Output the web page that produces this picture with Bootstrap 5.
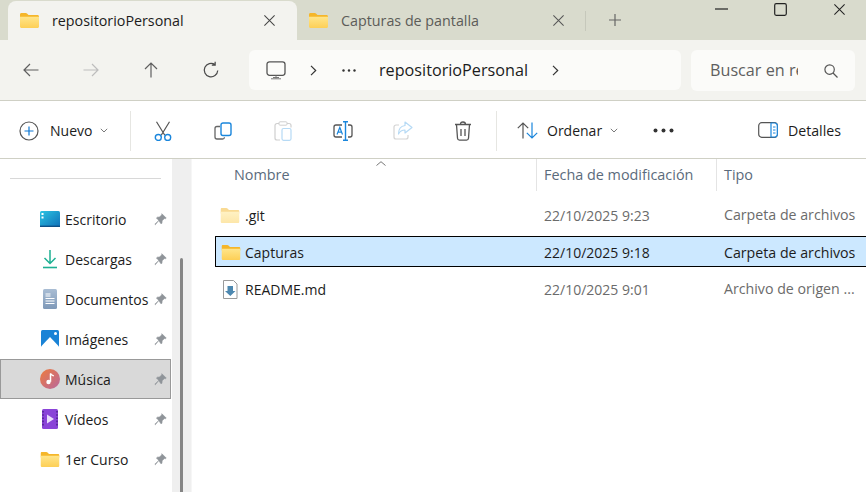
<!DOCTYPE html>
<html lang="es">
<head>
  <meta charset="utf-8"/>
  <title>repositorioPersonal</title>
  <link href="https://cdn.jsdelivr.net/npm/bootstrap@5.3.0/dist/css/bootstrap.min.css" rel="stylesheet"/>
  <style>
    html, body { height: 100%; }
    body {
      width: 866px; height: 492px; overflow: hidden; background: #fff;
      font-family: "Open Sans", "Liberation Sans", sans-serif; font-size: 14px; color: #1c1c1c;
    }
    svg { display: block; flex: none; }
    .sprite { position: absolute; width: 0; height: 0; }

    /* tabs */
    .tab-strip { height: 40px; background: #d9dbcd; padding: 1px 0 0 8px; }
    .win-tab { width: 289px; height: 39px; padding: 0 21px 0 12px; font-size: 14.3px; }
    .win-tab.is-active { background: #f3f3ef; border-radius: 8px 8px 0 0; }
    .win-tab.is-idle { width: 288px; padding-right: 20px; }
    .win-tab .tab-name { margin-left: 13px; white-space: nowrap; }
    .win-tab.is-idle .tab-name { color: #5c5c58; }
    .tab-sep { width: 1px; height: 20px; background: #c6c8bb; margin-top: 10px; }
    .tab-plus { margin: 12px 0 0 22px; }
    .win-controls { margin-left: auto; padding-right: 20px; height: 16px; gap: 46px; }

    /* address bar */
    .nav-strip { height: 61px; background: #f3f3ef; border-bottom: 1px solid #cfd0c5; padding: 10px 11px 0 1px; }
    .nav-btn { width: 60px; height: 40px; }
    .addr-box { width: 432px; height: 40px; background: #fbfbf9; border-radius: 6px; margin-left: 8px; padding-left: 17px; font-size: 16.2px; }
    .addr-dots { margin-left: 25px; }
    .addr-name { margin-left: 23px; }
    .search-box { width: 164px; height: 41px; background: #fbfbf9; border-radius: 6px; margin-left: 10px; padding: 0 17px 0 19px; color: #5f5f5f; font-size: 16.2px; }
    .search-box .search-text { width: 88px; overflow: hidden; white-space: nowrap; }

    /* command bar */
    .cmd-strip { height: 58px; border-bottom: 1px solid #cfd0c5; padding: 2px 25px 0 19px; }
    .cmd-sep { width: 1px; height: 40px; background: #e6e6e2; }
    .cmd-btn { width: 60px; height: 40px; }
    .cmd-new { width: 111px; }
    .cmd-new span { margin-left: 11px; }
    .cmd-group { margin-left: 2px; }
    .cmd-sep-2 { margin-left: 3px; }
    .cmd-sort { width: 137px; margin-left: 12px; padding-left: 8px; }
    .cmd-sort span { margin-left: 9px; }
    .cmd-more { margin-left: 7px; }
    .cmd-details span { margin-left: 10px; font-size: 14.2px; }

    /* main area */
    .main-area { height: 333px; }
    .side-pane { width: 172px; padding-top: 19px; }
    .side-rule { height: 1px; background: #d8d8d8; margin: 0 11px 20px 10px; }
    .side-item { height: 40px; padding-left: 39px; padding-right: 3px; border: 1px solid transparent; width: 171px; white-space: nowrap; }
    .side-item.is-current { background: #d9d9d9; border-color: #999; }
    .side-item .side-icon { width: 20px; margin-right: 5px; }
    .side-item .side-pin { margin-left: auto; }
    .side-scroll { width: 20px; background: #efefef; border-right: 1px solid #f6f6f6; padding: 99px 0 0 8px; }
    .side-thumb { width: 3px; height: 100%; background: #858585; border-radius: 2px 2px 0 0; }

    .list-pane { min-width: 0; position: relative; padding-left: 23px; }
    .sort-caret { position: absolute; left: 184px; top: 2px; }
    .list-head { height: 33px; color: #5b6b7c; font-size: 14.4px; }
    .head-cell { height: 32px; padding-left: 7px; }
    .col-name { width: 321px; }
    .head-cell.col-name { padding-left: 19px; }
    .col-date { width: 180px; }
    .head-cell.col-date, .head-cell.col-type { border-left: 1px solid #e4e4e4; }
    .file-row { height: 30px; margin-top: 7px; color: #6b6b6b; white-space: nowrap; }
    .file-row.first-row { margin-top: 8px; }
    .file-row .col-name { color: #1c1c1c; padding-left: 5px; width: 320px; }
    .file-row .col-date { padding-left: 9px; }
    .file-row .col-type { padding-left: 9px; font-size: 14.2px; }
    .file-row .file-icon { width: 20px; margin-right: 5px; }
    .file-row.is-selected { height: 31px; margin-top: 6px; padding-top: 2px; background: #cce8ff; border: 1px solid #000; border-right: 0; color: #1c1c1c; border-radius: 1px 0 0 1px; }
    .file-row.is-selected .col-name { width: 319px; }
    .file-row.is-selected .file-icon { margin-right: 4px; }
    .file-row.is-selected .col-date, .file-row.is-selected .col-type { padding-left: 9px; }
  </style>
</head>
<body>
  <svg class="sprite" aria-hidden="true">
    <defs>
      <linearGradient id="fold" x1="0" y1="0" x2="0" y2="1"><stop offset="0" stop-color="#ffe58a"/><stop offset="1" stop-color="#fdcf56"/></linearGradient>
      <linearGradient id="desk" x1="0" y1="0" x2="1" y2="1"><stop offset="0" stop-color="#2bc4e2"/><stop offset="1" stop-color="#0f6fb8"/></linearGradient>
      <linearGradient id="docs" x1="0" y1="0" x2="0" y2="1"><stop offset="0" stop-color="#a9bdd4"/><stop offset="1" stop-color="#7f99b8"/></linearGradient>
      <linearGradient id="mus" x1="0" y1="0" x2="1" y2="1"><stop offset="0" stop-color="#ee7b3c"/><stop offset="1" stop-color="#b8689f"/></linearGradient>
    </defs>
    <symbol id="i-folder" viewBox="0 0 19 15">
      <path d="M0 1.500C0 .7.6 0 1.400 0h4.400c.5 0 .9.2 1.200.5L8.500 2H17.500c.8 0 1.500.7 1.500 1.500v2H0z" fill="#f5b62a"/>
      <path d="M0 3.800h19v9.700c0 .8-.7 1.500-1.500 1.500h-16C.7 15 0 14.300 0 13.500z" fill="url(#fold)"/>
    </symbol>
    <symbol id="i-x" viewBox="0 0 14 14"><path d="M1.500 1.500l11 11m0-11l-11 11" stroke="currentColor" stroke-width="1.100" fill="none"/></symbol>
    <symbol id="i-pin" viewBox="0 0 14 14"><path d="M8.500.8l4.700 4.700-1 .7-1-.2-2.400 2.400-.2 2.500-.9.900L5 8.200 1.500 12.600.9 12 5.200 8 2.600 5.400l.9-.9 2.500-.2 2.400-2.400-.1-1z" fill="#8f9499" stroke="#8f9499" stroke-width=".6" stroke-linejoin="round"/></symbol>
    <symbol id="i-chev" viewBox="0 0 8 5"><path d="M.8.8L4 4l3.200-3.200" stroke="#7a7a7a" fill="none"/></symbol>
  </svg>

  <div class="tab-strip d-flex">
    <div class="win-tab is-active d-flex align-items-center">
      <svg width="19" height="15"><use href="#i-folder"/></svg>
      <span class="tab-name">repositorioPersonal</span>
      <svg class="ms-auto" width="13" height="13" color="#444"><use href="#i-x"/></svg>
    </div>
    <div class="win-tab is-idle d-flex align-items-center">
      <svg width="19" height="15"><use href="#i-folder"/></svg>
      <span class="tab-name">Capturas de pantalla</span>
      <svg class="ms-auto" width="13" height="13" color="#555"><use href="#i-x"/></svg>
    </div>
    <div class="tab-sep"></div>
    <svg class="tab-plus" width="14" height="14" viewBox="0 0 14 14"><path d="M7 1v12M1 7h12" stroke="#666" stroke-width="1.200"/></svg>
    <div class="win-controls d-flex align-items-center">
      <svg width="13" height="2" viewBox="0 0 13 2"><path d="M0 1h13" stroke="#222" stroke-width="1.200"/></svg>
      <svg width="13" height="13" viewBox="0 0 13 13"><rect x=".7" y=".7" width="11.600" height="11.600" rx="1.500" stroke="#222" stroke-width="1.200" fill="none"/></svg>
      <svg width="13" height="13" color="#222"><use href="#i-x"/></svg>
    </div>
  </div>

  <div class="nav-strip d-flex">
    <div class="nav-btn d-flex align-items-center justify-content-center">
      <svg width="16" height="14" viewBox="0 0 16 14"><path d="M15.500 7H1M7 1L1 7l6 6" stroke="#5f5f5f" stroke-width="1.200" fill="none"/></svg>
    </div>
    <div class="nav-btn d-flex align-items-center justify-content-center">
      <svg width="16" height="14" viewBox="0 0 16 14"><path d="M.5 7H15M9 1l6 6-6 6" stroke="#bdbdbd" stroke-width="1.200" fill="none"/></svg>
    </div>
    <div class="nav-btn d-flex align-items-center justify-content-center">
      <svg width="14" height="16" viewBox="0 0 14 16"><path d="M7 15.500V1M1 7l6-6 6 6" stroke="#5f5f5f" stroke-width="1.200" fill="none"/></svg>
    </div>
    <div class="nav-btn d-flex align-items-center justify-content-center">
      <svg width="18" height="18" viewBox="0 0 16 16"><path d="M14 8.500A6 6 0 1 1 11.500 3.200M11.700.7v3h-3" stroke="#4a4a4a" stroke-width="1.100" fill="none"/></svg>
    </div>
    <div class="addr-box d-flex align-items-center">
      <svg width="20" height="19" viewBox="0 0 20 19"><rect x="1" y=".8" width="18" height="13.500" rx="2.500" stroke="#555" stroke-width="1.300" fill="none"/><path d="M10 14.500v3M5 17.800h10M7 16.500h6" stroke="#777" stroke-width="1"/></svg>
      <svg class="ms-4" width="7" height="11" viewBox="0 0 7 11"><path d="M1 .8l4.700 4.700L1 10.200" stroke="#333" stroke-width="1.200" fill="none"/></svg>
      <svg class="addr-dots" width="14" height="3" viewBox="0 0 14 3"><circle cx="1.500" cy="1.500" r="1.200" fill="#333"/><circle cx="7" cy="1.500" r="1.200" fill="#333"/><circle cx="12.500" cy="1.500" r="1.200" fill="#333"/></svg>
      <span class="addr-name">repositorioPersonal</span>
      <svg class="ms-4" width="7" height="11" viewBox="0 0 7 11"><path d="M1 .8l4.700 4.700L1 10.200" stroke="#333" stroke-width="1.200" fill="none"/></svg>
    </div>
    <div class="search-box d-flex align-items-center">
      <span class="search-text">Buscar en re</span>
      <svg class="ms-auto" width="14" height="14" viewBox="0 0 14 14"><circle cx="5.600" cy="5.600" r="4.700" stroke="#555" stroke-width="1.200" fill="none"/><path d="M9 9l4.500 4.500" stroke="#555" stroke-width="1.300"/></svg>
    </div>
  </div>

  <div class="cmd-strip d-flex align-items-center">
    <div class="cmd-new d-flex align-items-center">
      <svg width="20" height="20" viewBox="0 0 20 20"><circle cx="10" cy="10" r="9" stroke="#555" stroke-width="1.200" fill="none"/><path d="M10 5.500v9M5.500 10h9" stroke="#0f78d4" stroke-width="1.200"/></svg>
      <span>Nuevo</span>
      <svg class="ms-2" width="8" height="5"><use href="#i-chev"/></svg>
    </div>
    <div class="cmd-sep"></div>
    <div class="cmd-group d-flex">
      <div class="cmd-btn d-flex align-items-center justify-content-center">
        <svg width="18" height="20" viewBox="0 0 18 20"><path d="M2.500.8l8.300 13.500M15.500.8L7.200 14.300" stroke="#555" stroke-width="1.200" fill="none"/><circle cx="4.300" cy="16.500" r="3" stroke="#1a86dc" stroke-width="1.400" fill="none"/><circle cx="13.700" cy="16.500" r="3" stroke="#1a86dc" stroke-width="1.400" fill="none"/></svg>
      </div>
      <div class="cmd-btn d-flex align-items-center justify-content-center">
        <svg width="18" height="18" viewBox="0 0 18 18"><path d="M6 4.500H3A2 2 0 0 0 1 6.500V15a2 2 0 0 0 2 2h5.500a2 2 0 0 0 2-1.800" stroke="#666" stroke-width="1.300" fill="none"/><rect x="7" y="1" width="10" height="12.500" rx="2" stroke="#1a86dc" stroke-width="1.400" fill="#fff"/></svg>
      </div>
      <div class="cmd-btn d-flex align-items-center justify-content-center">
        <svg width="18" height="20" viewBox="0 0 18 20"><path d="M5 2.500H3A2 2 0 0 0 1 4.500V17a2 2 0 0 0 2 2h3M13 2.500h2a2 2 0 0 1 2 2v2" stroke="#cfcfcf" stroke-width="1.200" fill="none"/><rect x="5" y=".8" width="8" height="3.400" rx="1" stroke="#cfcfcf" fill="none"/><rect x="8" y="7.500" width="9" height="11.800" rx="1.500" stroke="#b6daf5" stroke-width="1.200" fill="none"/></svg>
      </div>
      <div class="cmd-btn d-flex align-items-center justify-content-center">
        <svg width="20" height="20" viewBox="0 0 20 20"><path d="M9 4H3a2 2 0 0 0-2 2v8a2 2 0 0 0 2 2h6M15 4h2a2 2 0 0 1 2 2v8a2 2 0 0 1-2 2h-2" stroke="#555" stroke-width="1.300" fill="none"/><path d="M12.500.8v18.400M10 .8h5M10 19.200h5" stroke="#1a86dc" stroke-width="1.400"/><path d="M4 13.500L6.800 6.500l2.700 7M5 11.200h3.600" stroke="#1a86dc" stroke-width="1.200" fill="none"/></svg>
      </div>
      <div class="cmd-btn d-flex align-items-center justify-content-center">
        <svg width="20" height="19" viewBox="0 0 20 19"><path d="M6 4H3a2 2 0 0 0-2 2v10a2 2 0 0 0 2 2h10a2 2 0 0 0 2-2v-2" stroke="#d4d4d4" stroke-width="1.200" fill="none"/><path d="M12 1l7 5.500-7 5.500V9C9 9 7 10 5.500 13c0-5 2.500-8 6.500-8.500z" stroke="#b6daf5" stroke-width="1.200" fill="none" stroke-linejoin="round"/></svg>
      </div>
      <div class="cmd-btn d-flex align-items-center justify-content-center">
        <svg width="18" height="20" viewBox="0 0 18 20"><path d="M1 3.500h16M6.500 3.500C6.500 1.800 7.500 1 9 1s2.500.8 2.500 2.500M2.500 3.500l1 13.800a2 2 0 0 0 2 1.800h7a2 2 0 0 0 2-1.800l1-13.800M7 8v7M11 8v7" stroke="#555" stroke-width="1.300" fill="none"/></svg>
      </div>
    </div>
    <div class="cmd-sep cmd-sep-2"></div>
    <div class="cmd-sort d-flex align-items-center">
      <svg width="21" height="17" viewBox="0 0 21 17"><path d="M6 16.500V1M.8 6.200L6 1l5.200 5.200" stroke="#555" stroke-width="1.200" fill="none"/><path d="M15 .5V16M9.800 10.800L15 16l5.200-5.200" stroke="#1a86dc" stroke-width="1.200" fill="none"/></svg>
      <span>Ordenar</span>
      <svg class="ms-2" width="8" height="5"><use href="#i-chev"/></svg>
    </div>
    <svg class="cmd-more" width="21" height="5" viewBox="0 0 21 5"><circle cx="2.500" cy="2.500" r="2" fill="#333"/><circle cx="10.500" cy="2.500" r="2" fill="#333"/><circle cx="18.500" cy="2.500" r="2" fill="#333"/></svg>
    <div class="cmd-details d-flex align-items-center ms-auto">
      <svg width="20" height="16" viewBox="0 0 20 16"><rect x=".7" y=".7" width="18.600" height="14.600" rx="3" stroke="#555" stroke-width="1.200" fill="none"/><path d="M13 1h3.500A2.700 2.700 0 0 1 19.300 3.700v8.600a2.700 2.700 0 0 1-2.800 2.700H13z" stroke="#1a86dc" stroke-width="1.200" fill="#fff"/><path d="M15 5h2.500M15 8h2.500M15 11h2.500" stroke="#1a86dc"/></svg>
      <span>Detalles</span>
    </div>
  </div>

  <div class="main-area d-flex">
    <div class="side-pane">
      <div class="side-rule"></div>
      <div class="side-item d-flex align-items-center">
        <svg class="side-icon" height="16" viewBox="0 0 20 16"><rect width="20" height="16" rx="1.500" fill="url(#desk)"/><path d="M0 14.600h20V16H0z" fill="#0d4f86"/><rect x="1.500" y="2" width="2" height="2" fill="#fff"/><rect x="1.500" y="5.500" width="2" height="2" fill="#fff"/></svg>
        <span>Escritorio</span>
        <svg class="side-pin" width="13" height="13"><use href="#i-pin"/></svg>
      </div>
      <div class="side-item d-flex align-items-center">
        <svg class="side-icon" height="20" viewBox="0 0 20 20"><path d="M10 1v13M4.500 9l5.500 5.500L15.500 9" stroke="#1eb093" stroke-width="1.500" fill="none"/><path d="M3 18.500h14" stroke="#1eb093" stroke-width="1.600"/></svg>
        <span>Descargas</span>
        <svg class="side-pin" width="13" height="13"><use href="#i-pin"/></svg>
      </div>
      <div class="side-item d-flex align-items-center">
        <svg class="side-icon" height="20" viewBox="0 0 20 20"><rect x="3" y="0" width="14" height="20" rx="1.500" fill="url(#docs)"/><path d="M5.500 5h5M5.500 7h5M5.500 9.500h9M5.500 12h9M5.500 14.500h9" stroke="#fff" stroke-width="1"/></svg>
        <span>Documentos</span>
        <svg class="side-pin" width="13" height="13"><use href="#i-pin"/></svg>
      </div>
      <div class="side-item d-flex align-items-center">
        <svg class="side-icon" height="18" viewBox="0 0 20 18"><rect x="1" width="18" height="18" rx="1.500" fill="#1a83d6"/><path d="M1 16.500L10 7l9 9.500V18H1z" fill="#fff"/><circle cx="15.500" cy="3.500" r="1.500" fill="#fff"/></svg>
        <span>Imágenes</span>
        <svg class="side-pin" width="13" height="13"><use href="#i-pin"/></svg>
      </div>
      <div class="side-item is-current d-flex align-items-center">
        <svg class="side-icon" height="20" viewBox="0 0 20 20"><circle cx="10" cy="10" r="10" fill="url(#mus)"/><path d="M10.500 4.500v8.300" stroke="#fff" stroke-width="1.500"/><path d="M10.500 4.500c1 1.800 2.500 2 3.300 2.500" stroke="#fff" stroke-width="1.300" fill="none"/><circle cx="8.500" cy="13" r="2.200" fill="#fff"/></svg>
        <span>Música</span>
        <svg class="side-pin" width="13" height="13"><use href="#i-pin"/></svg>
      </div>
      <div class="side-item d-flex align-items-center">
        <svg class="side-icon" height="20" viewBox="0 0 20 20"><rect x="2" width="16" height="20" rx="1.500" fill="#8a44d8"/><path d="M7 5.500l7 4.500-7 4.500z" fill="#e9dcfb"/><path d="M3 2v16M17 2v16" stroke="#3d1a78" stroke-width="1.200" stroke-dasharray="1.600 1.600"/></svg>
        <span>Vídeos</span>
        <svg class="side-pin" width="13" height="13"><use href="#i-pin"/></svg>
      </div>
      <div class="side-item d-flex align-items-center">
        <svg class="side-icon" height="15" viewBox="0 0 19 15"><use href="#i-folder"/></svg>
        <span>1er Curso</span>
        <svg class="side-pin" width="13" height="13"><use href="#i-pin"/></svg>
      </div>
    </div>
    <div class="side-scroll"><div class="side-thumb"></div></div>

    <div class="list-pane flex-grow-1">
      <svg class="sort-caret" width="10" height="5" viewBox="0 0 10 5"><path d="M.5 4.500L5 .7l4.500 3.800" stroke="#777" fill="none"/></svg>
      <div class="list-head d-flex">
        <div class="head-cell col-name d-flex align-items-center">Nombre</div>
        <div class="head-cell col-date d-flex align-items-center">Fecha de modificación</div>
        <div class="head-cell col-type d-flex align-items-center">Tipo</div>
      </div>
      <div class="list-body">
        <div class="file-row first-row d-flex align-items-center">
          <div class="col-name d-flex align-items-center">
            <svg class="file-icon" height="15" viewBox="0 0 19 15" opacity=".5"><use href="#i-folder"/></svg>
            <span>.git</span>
          </div>
          <div class="col-date">22/10/2025 9:23</div>
          <div class="col-type">Carpeta de archivos</div>
        </div>
        <div class="file-row is-selected d-flex align-items-center">
          <div class="col-name d-flex align-items-center">
            <svg class="file-icon" height="15" viewBox="0 0 19 15"><use href="#i-folder"/></svg>
            <span>Capturas</span>
          </div>
          <div class="col-date">22/10/2025 9:18</div>
          <div class="col-type">Carpeta de archivos</div>
        </div>
        <div class="file-row d-flex align-items-center">
          <div class="col-name d-flex align-items-center">
            <svg class="file-icon" height="19" viewBox="0 0 20 19"><path d="M3.500.5h10l3.500 3.500v14.500H3.500z" fill="#fff" stroke="#9a9a9a"/><path d="M7.500 6h5.500v5h2.500l-5.200 5-5.300-5h2.500z" fill="#4d88b0"/></svg>
            <span>README.md</span>
          </div>
          <div class="col-date">22/10/2025 9:01</div>
          <div class="col-type">Archivo de origen ...</div>
        </div>
      </div>
    </div>
  </div>

  <script src="https://cdn.jsdelivr.net/npm/bootstrap@5.3.0/dist/js/bootstrap.bundle.min.js"></script>
</body>
</html>
